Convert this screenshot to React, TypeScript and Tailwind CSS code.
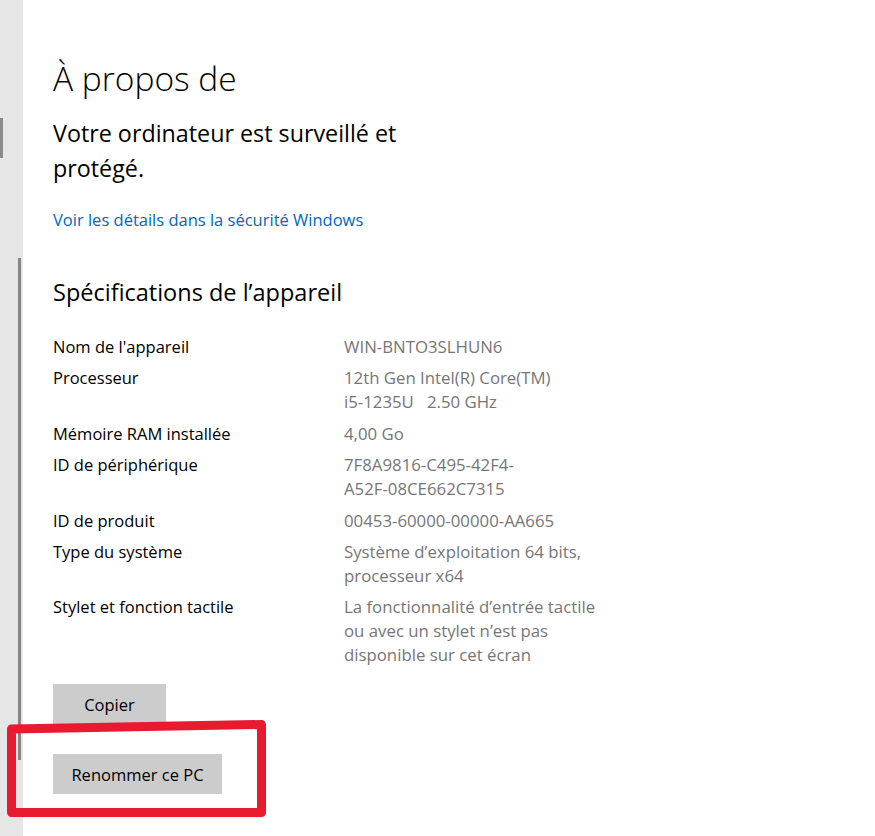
const font = { fontFamily: '"Segoe UI", "Open Sans", "Noto Sans", sans-serif' };

const specs: { label: string; value: string[] }[] = [
  { label: "Nom de l'appareil", value: ['WIN-BNTO3SLHUN6'] },
  { label: 'Processeur', value: ['12th Gen Intel(R) Core(TM)', 'i5-1235U   2.50 GHz'] },
  { label: 'Mémoire RAM installée', value: ['4,00 Go'] },
  { label: 'ID de périphérique', value: ['7F8A9816-C495-42F4-', 'A52F-08CE662C7315'] },
  { label: 'ID de produit', value: ['00453-60000-00000-AA665'] },
  { label: 'Type du système', value: ['Système d’exploitation 64 bits,', 'processeur x64'] },
  { label: 'Stylet et fonction tactile', value: ['La fonctionnalité d’entrée tactile', 'ou avec un stylet n’est pas', 'disponible sur cet écran'] },
];

function SpecRow({ label, value }: { label: string; value: string[] }) {
  return (
    <div className="flex text-[16.5px] leading-[24px]">
      <div className="w-[291px] shrink-0 text-[#000]">{label}</div>
      <div className="whitespace-pre text-[16.8px] text-[#767676]">
        {value.map((v) => (
          <div key={v}>{v}</div>
        ))}
      </div>
    </div>
  );
}

export default function App() {
  return (
    <div className="relative flex h-[836px] w-[875px] overflow-hidden bg-white" style={font}>
      <div className="relative w-[23px] shrink-0 bg-[#e6e6e6]">
        <div className="absolute left-0 top-[118px] h-[40px] w-[3px] bg-[#8a8a8a]" />
        <div className="absolute left-[18px] top-[258px] h-[502px] w-[3px] bg-[#858585]" />
      </div>

      <div className="flex flex-col pl-[30px] pt-[56px]">
        <h1 className="text-[33.5px] font-light leading-[44px] text-black">À propos de</h1>

        <p className="mt-[16px] w-[380px] text-[23.3px] leading-[35px] text-black">
          Votre ordinateur est surveillé et protégé.
        </p>

        <a className="mt-[22px] text-[16.5px] leading-[24px] text-[#0067c0]">
          Voir les détails dans la sécurité Windows
        </a>

        <h2 className="mt-[44px] text-[23.5px] leading-[32px] text-black">Spécifications de l’appareil</h2>

        <div className="mt-[27px] flex flex-col gap-[7.4px]">
          {specs.map((s) => (
            <SpecRow key={s.label} label={s.label} value={s.value} />
          ))}
        </div>

        <button className="mt-[17px] h-[40px] w-[113px] bg-[#cccccc] pt-[2px] text-[16.5px] text-black">Copier</button>
        <button className="mt-[30px] h-[40px] w-[169px] bg-[#cccccc] pt-[2px] text-[16.5px] text-black">Renommer ce PC</button>
      </div>

      <svg className="pointer-events-none absolute left-0 top-0" width="875" height="836">
        <path
          d="M11.5 729 L261.5 724.5 L261.5 812.5 L11.5 812.5 Z"
          fill="none"
          stroke="#e81a30"
          strokeWidth="9"
          strokeLinejoin="round"
        />
      </svg>
    </div>
  );
}
